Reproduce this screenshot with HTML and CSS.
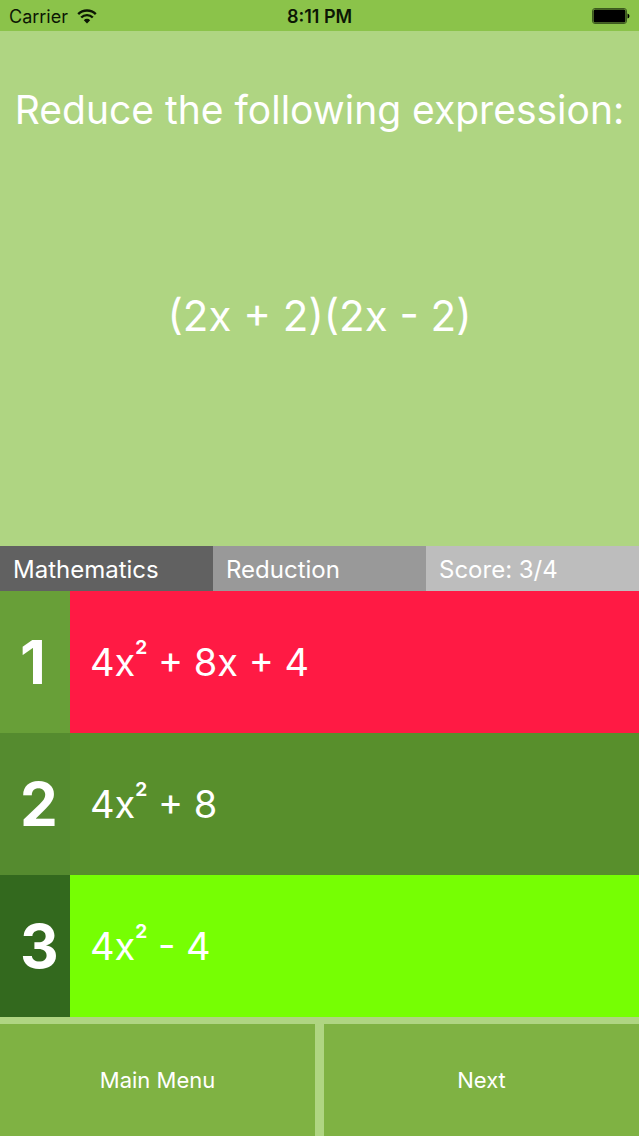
FILE: index.html
```html
<!DOCTYPE html>
<html lang="en">
  <head>
    <meta charset="UTF-8" />
    <meta name="viewport" content="width=device-width, initial-scale=1.0" />
    <title>Mathematics - Reduction</title>
    <link rel="stylesheet" href="styles.css">
  </head>
  <body>
    <header class="status-bar">
      <div class="carrier">
        <span>Carrier</span>
        <svg class="wifi" viewBox="0 0 20 15" aria-hidden="true">
          <path d="M1.2 5.2a12.4 12.4 0 0 1 17.6 0" />
          <path d="M4.2 8.5a8.2 8.2 0 0 1 11.6 0" />
          <path class="wifi-dot" d="M10 14.4l-3.2-3.2a4.5 4.5 0 0 1 6.4 0z" />
        </svg>
      </div>
      <div class="time">8:11 PM</div>
      <div class="battery">
        <svg viewBox="0 0 38 16" aria-hidden="true">
          <rect class="battery-shell" x="0.5" y="0.5" width="34" height="15" rx="2.5" />
          <rect x="1.5" y="1.5" width="32" height="13" rx="1.5" />
          <path d="M35.5 5.5q2 0.5 2 2.5t-2 2.5z" />
        </svg>
      </div>
    </header>

    <main class="question">
      <h1>Reduce the following expression:</h1>
      <p class="expression">(2x + 2)(2x - 2)</p>
    </main>

    <section class="info">
      <div class="subject">Mathematics</div>
      <div class="topic">Reduction</div>
      <div class="score">Score: 3/4</div>
    </section>

    <section class="answers">
      <button type="button" class="answer answer-1 wrong">
        <span class="number">1</span>
        <span class="text">4x<sup>2</sup> + 8x + 4</span>
      </button>
      <button type="button" class="answer answer-2">
        <span class="number">2</span>
        <span class="text">4x<sup>2</sup> + 8</span>
      </button>
      <button type="button" class="answer answer-3 correct">
        <span class="number">3</span>
        <span class="text">4x<sup>2</sup> - 4</span>
      </button>
    </section>

    <nav class="actions">
      <button type="button">Main Menu</button>
      <button type="button">Next</button>
    </nav>
  </body>
</html>
```

FILE: styles.css
```css
* {
  box-sizing: border-box;
}

body {
  margin: 0;
  min-height: 100vh;
  display: flex;
  flex-direction: column;
  font-family: Inter, "Liberation Sans", sans-serif;
  color: #fff;
  background-color: #afd582; /* Light green background */
}

button {
  margin: 0;
  padding: 0;
  border: 0;
  font: inherit;
  color: inherit;
  cursor: pointer;
}

/* Status bar */
.status-bar {
  display: grid;
  grid-template-columns: 1fr auto 1fr;
  align-items: center;
  height: 31px;
  padding: 1px 9px 0;
  font-size: 18px;
  color: #0c1604;
  background-color: #8bc34a;
}

.carrier {
  display: flex;
  align-items: center;
  gap: 9px;
}

.wifi {
  width: 20px;
  height: 15px;
  fill: none;
  stroke: #0c1604;
  stroke-width: 2.4;
}

.wifi .wifi-dot {
  fill: #0c1604;
  stroke: none;
}

.time {
  font-weight: 600;
}

.battery {
  display: flex;
  justify-content: flex-end;
}

.battery svg {
  width: 38px;
  height: 16px;
}

.battery-shell {
  fill: none;
  stroke: #3c5a1e;
}

/* Question */
.question {
  flex: 1;
  text-align: center;
}

.question h1 {
  margin: 54px 0 0;
  font-size: 39px;
  font-weight: 400;
  line-height: 50px;
}

.expression {
  margin: 154px 0 0;
  font-size: 42px;
  line-height: 54px;
}

/* Subject, topic and score */
.info {
  display: grid;
  grid-template-columns: repeat(3, 1fr);
  font-size: 24px;
  line-height: 47px;
}

.info div {
  height: 45px;
  padding-left: 13px;
}

.subject {
  background-color: #616161;
}

.topic {
  background-color: #999;
}

.score {
  background-color: #bdbdbd;
}

/* Answers */
.answers {
  display: flex;
  flex-direction: column;
}

.answer {
  display: flex;
  height: 142px;
  line-height: 142px;
  text-align: left;
  background-color: #588f2c;
}

.number {
  width: 70px;
  padding-left: 20px;
  font-size: 60px;
  font-weight: 700;
}

.text {
  flex: 1;
  padding-left: 20px;
  font-size: 38px;
}

.text sup {
  font-size: 19px;
  font-weight: 700;
  line-height: 0;
  vertical-align: 22px;
}

.answer-1 .number {
  background-color: #689f38;
}

.answer-2 .number {
  background-color: #558b2f;
}

.answer-3 .number {
  background-color: #33691e;
}

.wrong {
  background-color: #ff1a44;
}

.correct {
  background-color: #76ff03;
}

/* Bottom buttons */
.actions {
  display: grid;
  grid-template-columns: 1fr 1fr;
  gap: 9px;
  padding-top: 7px;
}

.actions button {
  height: 112px;
  font-size: 22px;
  background-color: #7fb243;
}
```
